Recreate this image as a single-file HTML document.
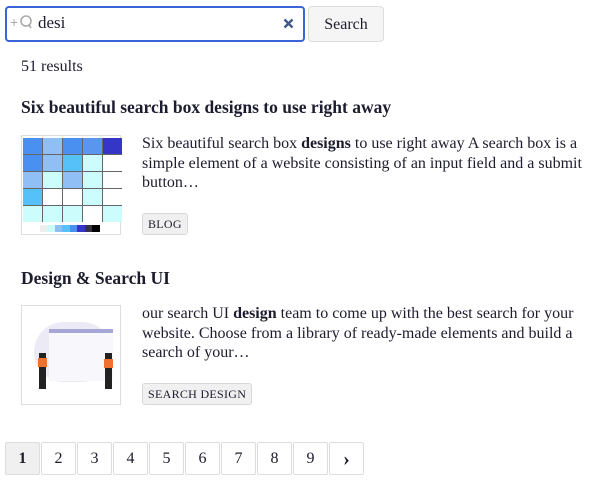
<!DOCTYPE html>
<html><head><style>
body{margin:0;width:604px;height:485px;background:#fff;font-family:"Liberation Serif",serif;color:#1c1c2e;position:relative;overflow:hidden}
.abs{position:absolute}
.inp{left:5px;top:6px;width:296px;height:32px;border:2px solid #3a64d8;border-radius:4px}
.btn{left:308px;top:6px;width:74px;height:34px;border:1px solid #ddd;border-radius:4px;background:#f5f5f5;font-size:16px;text-align:center;line-height:35px}
h2{margin:0;font-size:17.5px;font-weight:bold;position:absolute;left:21px}
.thumb{left:21px;width:98px;height:98px;border:1px solid #ddd;background:#fff}
.txt{left:142px;width:440px;font-size:16px;line-height:19.5px}
.tag{left:142px;height:20px;border:1px solid #d8d8d8;background:#f0f0f0;border-radius:3px;font-size:12px;line-height:20px;padding:0 5px;letter-spacing:.3px}
.pg{top:442px;width:33px;height:31px;border:1px solid #ddd;border-radius:2px;text-align:center;line-height:32px;font-size:16px}
.g{position:absolute;left:1px;top:1px;display:grid;grid-template-columns:repeat(5,19px);grid-template-rows:repeat(5,16px);gap:1px;background:#666;padding:0}
</style></head><body>
<div class="abs inp"></div>
<div class="abs" style="left:10px;top:14px;font-size:14px;color:#aaa;font-family:'Liberation Sans',sans-serif">+</div>
<svg class="abs" style="left:19px;top:14px" width="14" height="16"><circle cx="7" cy="7" r="5" fill="none" stroke="#aaa" stroke-width="1.6"/><line x1="10" y1="11" x2="12" y2="14" stroke="#aaa" stroke-width="1.6"/></svg>
<div class="abs" style="left:38px;top:13px;font-size:17px">desi</div>
<svg class="abs" style="left:283px;top:18px" width="11" height="11"><path d="M1.5 1.5L9.5 9.5M9.5 1.5L1.5 9.5" stroke="#3d5a8a" stroke-width="2.4"/></svg>
<div class="abs btn">Search</div>
<div class="abs" style="left:21px;top:58px;font-size:16px">51 results</div>

<h2 style="top:97px">Six beautiful search box designs to use right away</h2>
<div class="abs thumb" style="top:135px">
<div class="g" style="left:1px;top:2px">
<div style="background:#4a90f0"></div><div style="background:#8fbff5"></div><div style="background:#4a90f0"></div><div style="background:#5a95ee"></div><div style="background:#3535c8"></div>
<div style="background:#4a90f0"></div><div style="background:#8fbff5"></div><div style="background:#56c0f8"></div><div style="background:#cdfcfc"></div><div style="background:#fff"></div>
<div style="background:#8fbff5"></div><div style="background:#cdfcfc"></div><div style="background:#8fbff5"></div><div style="background:#cdfcfc"></div><div style="background:#fff"></div>
<div style="background:#56c0f8"></div><div style="background:#fff"></div><div style="background:#fff"></div><div style="background:#cdfcfc"></div><div style="background:#fff"></div>
<div style="background:#cdfcfc"></div><div style="background:#cdfcfc"></div><div style="background:#cdfcfc"></div><div style="background:#fff"></div><div style="background:#cdfcfc"></div>
</div>
<div class="abs" style="left:18px;top:89px;width:60px;height:7px;background:linear-gradient(90deg,#eee 0 12%,#cdfcfc 12% 25%,#8fbff5 25% 37%,#56c0f8 37% 50%,#4a90f0 50% 62%,#3535c8 62% 75%,#334 75% 87%,#000 87%)"></div>
</div>
<div class="abs txt" style="top:134px">Six beautiful search box <b>designs</b> to use right away A search box is a simple element of a website consisting of an input field and a submit button…</div>
<div class="abs tag" style="top:213px">BLOG</div>

<h2 style="top:268px">Design &amp; Search UI</h2>
<div class="abs thumb" style="top:305px">
<div class="abs" style="left:12px;top:16px;width:78px;height:60px;border-radius:40px;background:#ecebf5"></div>
<div class="abs" style="left:27px;top:23px;width:64px;height:48px;background:#f8f8fc;border-top:4px solid #a8a6d4"></div>
<div class="abs" style="left:17px;top:47px;width:7px;height:36px;background:#222"></div>
<div class="abs" style="left:16px;top:52px;width:9px;height:9px;background:#f07030"></div>
<div class="abs" style="left:83px;top:47px;width:7px;height:36px;background:#222"></div>
<div class="abs" style="left:82px;top:53px;width:9px;height:9px;background:#f07030"></div>
</div>
<div class="abs txt" style="top:304px">our search UI <b>design</b> team to come up with the best search for your website. Choose from a library of ready-made elements and build a search of your…</div>
<div class="abs tag" style="top:383px">SEARCH DESIGN</div>

<div class="abs pg" style="left:5px;background:#f0f0f0;font-weight:bold">1</div>
<div class="abs pg" style="left:41px">2</div>
<div class="abs pg" style="left:77px">3</div>
<div class="abs pg" style="left:113px">4</div>
<div class="abs pg" style="left:149px">5</div>
<div class="abs pg" style="left:185px">6</div>
<div class="abs pg" style="left:221px">7</div>
<div class="abs pg" style="left:257px">8</div>
<div class="abs pg" style="left:293px">9</div>
<div class="abs pg" style="left:329px;font-weight:bold;font-size:20px">›</div>
</body></html>
